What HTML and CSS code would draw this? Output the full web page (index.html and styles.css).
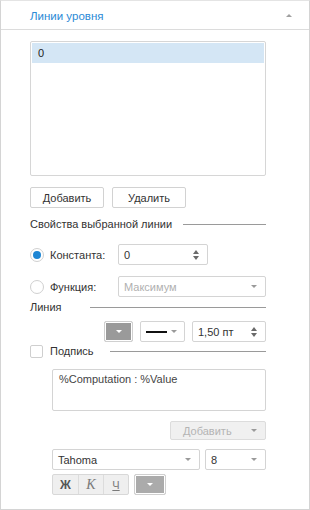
FILE: index.html
```html
<!DOCTYPE html>
<html lang="ru">
<head>
    <meta charset="UTF-8">
    <title>Линии уровня</title>
    <link rel="stylesheet" href="styles.css">
</head>
<body>
    <div class="panel">
        <div class="panel-header">
            <span class="panel-title">Линии уровня</span>
            <span class="collapse-arrow"></span>
        </div>

        <div class="panel-body">
            <div class="list-box">
                <div class="list-item selected">0</div>
            </div>

            <div class="button-row">
                <button class="btn">Добавить</button>
                <button class="btn">Удалить</button>
            </div>

            <div class="section-title first">
                <span>Свойства выбранной линии</span>
                <span class="rule"></span>
            </div>

            <div class="form-row const-row">
                <span class="radio checked"></span>
                <span class="label">Константа:</span>
                <div class="field spin-field">
                    <span class="value">0</span>
                    <span class="spin"><i class="up"></i><i class="down"></i></span>
                </div>
            </div>

            <div class="form-row func-row">
                <span class="radio"></span>
                <span class="label">Функция:</span>
                <div class="field combo disabled">
                    <span class="value">Максимум</span>
                    <span class="caret"></span>
                </div>
            </div>

            <div class="section-title line-title">
                <span>Линия</span>
                <span class="rule"></span>
            </div>

            <div class="line-controls">
                <div class="color-btn"><span class="caret white"></span></div>
                <div class="field style-combo">
                    <span class="line-sample"></span>
                    <span class="caret"></span>
                </div>
                <div class="field spin-field width-field">
                    <span class="value">1,50 пт</span>
                    <span class="spin"><i class="up"></i><i class="down"></i></span>
                </div>
            </div>

            <div class="section-title caption-title">
                <span class="checkbox"></span>
                <span class="caption-label">Подпись</span>
                <span class="rule"></span>
            </div>

            <div class="caption-block">
                <div class="text-area">%Computation : %Value</div>

                <div class="add-row">
                    <div class="drop-btn disabled">
                        <span>Добавить</span>
                        <span class="caret"></span>
                    </div>
                </div>

                <div class="font-row">
                    <div class="field combo font-combo">
                        <span class="value">Tahoma</span>
                        <span class="caret"></span>
                    </div>
                    <div class="field combo size-combo">
                        <span class="value">8</span>
                        <span class="caret"></span>
                    </div>
                </div>

                <div class="format-row">
                    <div class="format-group">
                        <span class="fmt bold">Ж</span>
                        <span class="fmt italic">К</span>
                        <span class="fmt underline">Ч</span>
                    </div>
                    <div class="color-btn text-color"><span class="caret white"></span></div>
                </div>
            </div>
        </div>
    </div>
</body>
</html>
```

FILE: styles.css
```css
* {
    box-sizing: border-box;
}

body {
    margin: 0;
    font-family: 'Liberation Sans', Arial, sans-serif;
    font-size: 11px;
    color: #333;
    background: #fff;
}

.panel {
    width: 310px;
    height: 510px;
    border: 1px solid #d4d4d4;
    border-top-color: #e4e4e4;
}

.panel-header {
    height: 29px;
    border-bottom: 1px solid #dcdcdc;
    display: flex;
    align-items: center;
    justify-content: space-between;
    padding: 0 17px 0 29px;
}

.panel-title {
    color: #2b8ad6;
    font-size: 11.5px;
    margin-top: 2px;
}

.collapse-arrow {
    width: 0;
    height: 0;
    border-left: 3px solid transparent;
    border-right: 3px solid transparent;
    border-bottom: 3px solid #a0a0a0;
}

.panel-body {
    padding: 11px 0 0 29px;
    width: 265px;
}

.list-box {
    height: 135px;
    border: 1px solid #d6d6d6;
    border-radius: 2px;
    padding: 1px;
}

.list-item {
    height: 20px;
    line-height: 20px;
    padding-left: 6px;
    color: #222;
}

.list-item.selected {
    background: #d4e6f5;
}

.button-row {
    display: flex;
    gap: 8px;
    margin-top: 11px;
}

.btn {
    width: 74px;
    height: 21px;
    font-family: inherit;
    font-size: 11px;
    color: #333;
    background: #fff;
    border: 1px solid #d2d2d2;
    border-radius: 2px;
    padding: 0;
}

.section-title {
    display: flex;
    align-items: center;
    height: 16px;
    color: #333;
}

.section-title .rule {
    flex: 1;
    height: 1px;
    background: #9a9a9a;
}

.section-title.first {
    margin-top: 8px;
}

.section-title.first .rule {
    margin-left: 11px;
}

.form-row {
    display: flex;
    align-items: center;
    height: 21px;
}

.const-row {
    margin-top: 12px;
}

.func-row {
    margin-top: 11px;
}

.radio {
    width: 14px;
    height: 14px;
    border: 1px solid #d0d0d0;
    border-radius: 50%;
    margin-right: 6px;
    position: relative;
}

.radio.checked::after {
    content: "";
    position: absolute;
    left: 2px;
    top: 2px;
    width: 8px;
    height: 8px;
    border-radius: 50%;
    background: #1e86d4;
}

.label {
    width: 68px;
}

.field {
    height: 21px;
    border: 1px solid #d4d4d4;
    border-radius: 2px;
    background: #fff;
    display: flex;
    align-items: center;
    justify-content: space-between;
    padding: 0 8px 0 5px;
}

.spin-field {
    width: 90px;
}

.func-row .combo {
    flex: 1;
}

.field.disabled .value {
    color: #b0b0b0;
}

.spin {
    display: flex;
    flex-direction: column;
    gap: 2px;
}

.spin i {
    width: 0;
    height: 0;
    border-left: 3px solid transparent;
    border-right: 3px solid transparent;
}

.spin .up {
    border-bottom: 4px solid #6a6a6a;
}

.spin .down {
    border-top: 4px solid #6a6a6a;
}

.caret {
    width: 0;
    height: 0;
    border-left: 3px solid transparent;
    border-right: 3px solid transparent;
    border-top: 3px solid #9a9a9a;
}

.caret.white {
    border-top-color: #fff;
}

.line-title {
    margin-top: 2px;
}

.line-title .rule {
    margin-left: 28px;
}

.line-controls {
    display: flex;
    justify-content: flex-end;
    gap: 7px;
    margin-top: 6px;
}

.color-btn {
    width: 29px;
    height: 21px;
    border: 1px solid #d0d0d0;
    border-radius: 2px;
    display: flex;
    background: #9a9a9a;
    box-shadow: inset 0 0 0 1px #fff;
}

.color-btn .caret {
    margin: auto;
}

.style-combo {
    width: 45px;
    padding: 0 7px 0 5px;
}

.line-sample {
    width: 21px;
    height: 2px;
    background: #111;
}

.width-field {
    width: 74px;
}

.caption-title {
    margin-top: 2px;
    height: 14px;
}

.checkbox {
    width: 13px;
    height: 13px;
    border: 1px solid #cfcfcf;
    border-radius: 2px;
    margin-right: 7px;
}

.caption-title .rule {
    margin-left: 16px;
}

.caption-block {
    padding-left: 22px;
}

.text-area {
    height: 42px;
    margin-top: 11px;
    border: 1px solid #d4d4d4;
    border-radius: 2px;
    padding: 3px 6px;
    color: #444;
}

.add-row {
    display: flex;
    justify-content: flex-end;
    margin-top: 10px;
}

.drop-btn {
    width: 96px;
    height: 19px;
    border: 1px solid #dcdcdc;
    border-radius: 2px;
    background: #f0f0f0;
    display: flex;
    align-items: center;
    justify-content: space-between;
    padding: 0 8px 0 12px;
    color: #b4b4b4;
}

.font-row {
    display: flex;
    gap: 5px;
    margin-top: 9px;
}

.font-combo {
    width: 148px;
}

.size-combo {
    flex: 1;
}

.format-row {
    display: flex;
    gap: 5px;
    margin-top: 4px;
}

.format-group {
    display: flex;
    height: 21px;
    border: 1px solid #d8d8d8;
    border-radius: 2px;
    background: #efefef;
}

.fmt {
    width: 25px;
    display: flex;
    align-items: center;
    justify-content: center;
    color: #7a7a7a;
    border-left: 1px solid #dcdcdc;
}

.fmt:first-child {
    border-left: none;
}

.fmt.bold {
    font-weight: bold;
    color: #555;
    font-size: 12px;
}

.fmt.italic {
    font-family: 'Liberation Serif', serif;
    font-style: italic;
    font-size: 14px;
}

.fmt.underline {
    text-decoration: underline;
    font-size: 11px;
}

.text-color {
    width: 32px;
    background: #ababab;
}
```
